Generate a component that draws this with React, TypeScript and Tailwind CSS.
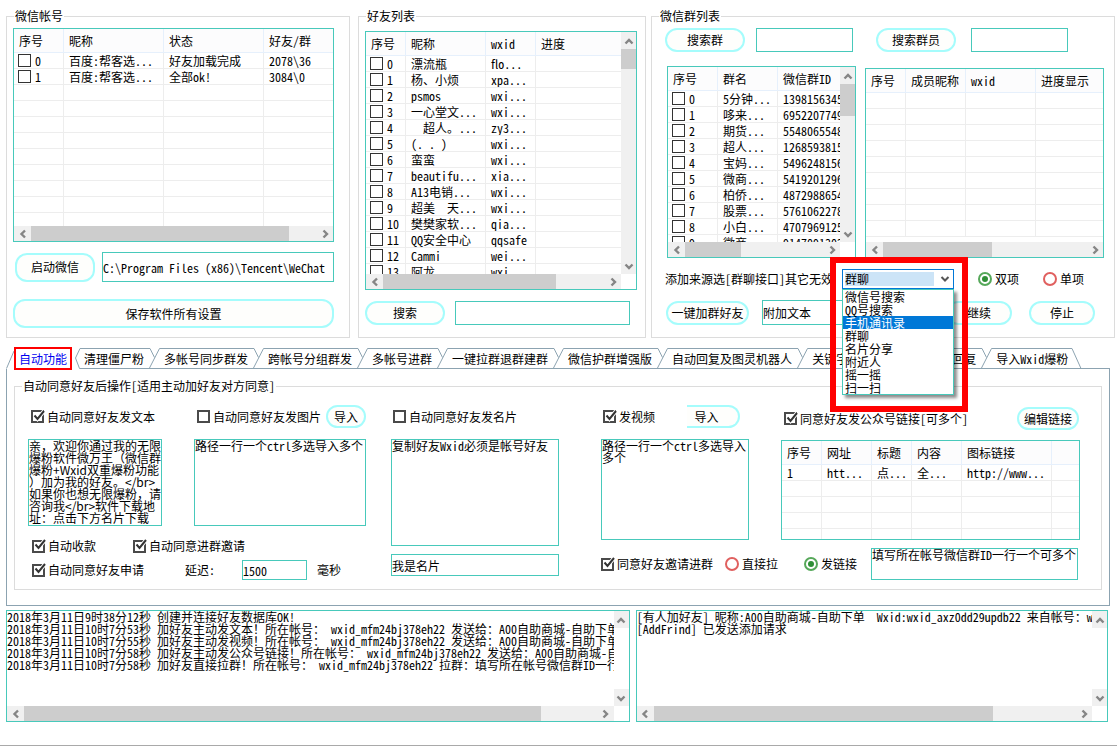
import type { ReactNode } from 'react';
import clsx from 'clsx';

type Column = { label: string; width?: string };

const accountColumns: Column[] = [
  { label: '序号', width: 'w-[50px]' },
  { label: '昵称', width: 'w-[100px]' },
  { label: '状态', width: 'w-[100px]' },
  { label: '好友/群' }
];

const accounts = [
  ['0', '百度:帮客选...', '好友加载完成', '2078\\36'],
  ['1', '百度:帮客选...', '全部ok!', '3084\\0']
];

const friendColumns: Column[] = [
  { label: '序号', width: 'w-[40px]' },
  { label: '昵称', width: 'w-[80px]' },
  { label: 'wxid', width: 'w-[50px]' },
  { label: '进度' }
];

const friends = [
  ['0', '漂流瓶', 'flo...', ''],
  ['1', '杨、小烦', 'xpa...', ''],
  ['2', 'psmos', 'wxi...', ''],
  ['3', '一心堂文...', 'wxi...', ''],
  ['4', '  超人。...', 'zy3...', ''],
  ['5', '(. . )', 'wxi...', ''],
  ['6', '蛮蛮', 'wxi...', ''],
  ['7', 'beautifu...', 'xia...', ''],
  ['8', 'A13电销...', 'wxi...', ''],
  ['9', '超美  天...', 'wxi...', ''],
  ['10', '樊樊家软...', 'qia...', ''],
  ['11', 'QQ安全中心', 'qqsafe', ''],
  ['12', 'Cammi', 'wei...', ''],
  ['13', '阿龙', 'wxi...', '']
];

const groupColumns: Column[] = [
  { label: '序号', width: 'w-[50px]' },
  { label: '群名', width: 'w-[60px]' },
  { label: '微信群ID' }
];

const groups = [
  ['0', '5分钟...', '13981563455'],
  ['1', '哆来...', '69522077492'],
  ['2', '期货...', '55480655480'],
  ['3', '超人...', '12685938152'],
  ['4', '宝妈...', '54962481566'],
  ['5', '微商...', '54192012960'],
  ['6', '柏侨...', '48729886542'],
  ['7', '股票...', '57610622780'],
  ['8', '小白...', '47079691250'],
  ['9', '微商...', '91470913024']
];

const memberColumns: Column[] = [
  { label: '序号', width: 'w-[40px]' },
  { label: '成员昵称', width: 'w-[60px]' },
  { label: 'wxid', width: 'w-[70px]' },
  { label: '进度显示' }
];

const linkColumns: Column[] = [
  { label: '序号', width: 'w-[40px]' },
  { label: '网址', width: 'w-[50px]' },
  { label: '标题', width: 'w-[40px]' },
  { label: '内容', width: 'w-[50px]' },
  { label: '图标链接', width: 'w-[90px]' },
  { label: '' }
];

const links = [['1', 'htt...', '点...', '全...', 'http://www...', '']];

const sources = ['微信号搜索', 'QQ号搜索', '手机通讯录', '群聊', '名片分享', '附近人', '摇一摇', '扫一扫'];

const tabs = [
  '清理僵尸粉',
  '多帐号同步群发',
  '跨帐号分组群发',
  '多帐号进群',
  '一键拉群退群建群',
  '微信护群增强版',
  '自动回复及图灵机器人',
  '关键字回复',
  '多帐号自动回复',
  '导入Wxid爆粉'
];

const welcomeText = `亲，欢迎你通过我的无限
爆粉软件微万王（微信群
爆粉+Wxid双重爆粉功能
）加为我的好友。</br>
如果你也想无限爆粉，请
咨询我</br>软件下载地
址：点击下方名片下载`;

const sendLog = `2018年3月11日9时38分12秒 创建并连接好友数据库OK!
2018年3月11日10时7分53秒 加好友主动发文本！所在帐号： wxid_mfm24bj378eh22 发送给：A00自助商城-自助下单
2018年3月11日10时7分55秒 加好友主动发视频！所在帐号： wxid_mfm24bj378eh22 发送给：A00自助商城-自助下单
2018年3月11日10时7分58秒 加好友主动发公众号链接！所在帐号： wxid_mfm24bj378eh22 发送给：A00自助商城-自助下单
2018年3月11日10时7分58秒 加好友直接拉群！所在帐号： wxid_mfm24bj378eh22 拉群：填写所在帐号微信群ID一行一个可多个`;

const addLog = `[有人加好友] 昵称:A00自助商城-自助下单  Wxid:wxid_axz0dd29updb22 来自帐号：wxid_mfm24bj378eh22
[AddFrind] 已发送添加请求`;

const chevrons = {
  up: 'M1.5 7.5 L5 4 L8.5 7.5',
  down: 'M1.5 3.5 L5 7 L8.5 3.5',
  left: 'M7 1.5 L3.5 5 L7 8.5',
  right: 'M3.5 1.5 L7 5 L3.5 8.5'
};

function Chevron({ dir }: { dir: keyof typeof chevrons }) {
  return (
    <svg width="10" height="10" viewBox="0 0 10 10" fill="none" className="shrink-0">
      <path d={chevrons[dir]} stroke="#858585" strokeWidth="2.4" />
    </svg>
  );
}

function HScroll({ thumb }: { thumb: string }) {
  return (
    <div className="h-[15px] flex min-w-0 flex-1 bg-[#f0f0f0]">
      <div className="w-[17px] shrink-0 flex items-center justify-center"><Chevron dir="left" /></div>
      <div className="flex-1 min-w-0"><div className={clsx('h-full bg-[#cdcdcd]', thumb)} /></div>
      <div className="w-[17px] shrink-0 flex items-center justify-center"><Chevron dir="right" /></div>
    </div>
  );
}

function VScroll({ thumb }: { thumb?: string }) {
  return (
    <div className={clsx('w-[15px] shrink-0 flex flex-col', thumb && 'bg-[#f0f0f0]')}>
      <div className="h-[17px] flex items-center justify-center bg-[#f0f0f0]"><Chevron dir="up" /></div>
      <div className="flex-1"><div className={clsx('bg-[#cdcdcd]', thumb)} /></div>
      <div className="h-[17px] flex items-center justify-center bg-[#f0f0f0]"><Chevron dir="down" /></div>
    </div>
  );
}

// Bordered area with the optional scroll bars round its content
function ScrollBox({ className, hThumb, vBar, vThumb, children }: {
  className: string;
  hThumb?: string;
  vBar?: boolean;
  vThumb?: string;
  children: ReactNode;
}) {
  return (
    <div className={clsx('flex flex-col border border-[#48c9bb] bg-white', className)}>
      <div className="flex flex-1 min-h-0">
        <div className="flex-1 min-w-0 overflow-hidden">{children}</div>
        {vBar && <VScroll thumb={vThumb} />}
      </div>
      {hThumb && (
        <div className="flex">
          <HScroll thumb={hThumb} />
          {vBar && <div className="w-[15px] shrink-0" />}
        </div>
      )}
    </div>
  );
}

function DataTable({ name, columns, rows, total, checkable }: {
  name: string;
  columns: Column[];
  rows: string[][];
  total: number;
  checkable?: boolean;
}) {
  const blank = Array.from({ length: Math.max(0, total - rows.length) });
  return (
    <table aria-label={name} className="w-full table-fixed border-separate border-spacing-0">
      <thead>
        <tr>
          {columns.map((column, index) => (
            <th
              key={index}
              className={clsx(
                'h-6 p-0 pl-[5px] text-left font-normal whitespace-nowrap overflow-hidden bg-[#fcfcfd] border-b border-[#e6f0fc]',
                index < columns.length - 1 && 'border-r',
                column.width
              )}
            >
              {column.label}
            </th>
          ))}
        </tr>
      </thead>
      <tbody>
        {rows.map((row, r) => (
          <tr key={r}>
            {row.map((cell, index) => (
              <td
                key={index}
                className={clsx(
                  'h-4 p-0 leading-[15px] whitespace-pre overflow-hidden border-b border-[#ededed]',
                  index < row.length - 1 && 'border-r',
                  index === 0 && checkable ? 'pl-1' : 'pl-[5px]'
                )}
              >
                {index === 0 && checkable ? (
                  <label className="flex items-center gap-1 h-[15px]">
                    <input type="checkbox" className="appearance-none size-[13px] shrink-0 border border-[#333] bg-white" />
                    {cell}
                  </label>
                ) : cell}
              </td>
            ))}
          </tr>
        ))}
        {blank.map((_, r) => (
          <tr key={r}>
            {columns.map((_, index) => (
              <td key={index} className={clsx('h-4 p-0 border-b border-[#ededed]', index < columns.length - 1 && 'border-r')} />
            ))}
          </tr>
        ))}
      </tbody>
    </table>
  );
}

function Group({ title, children, className }: { title: string; children: ReactNode; className?: string }) {
  return (
    <fieldset className={clsx('min-w-0 border border-[#dcdcdc]', className)}>
      <legend className="ml-[7px] px-px h-4 leading-4">{title}</legend>
      {children}
    </fieldset>
  );
}

function PillButton({ children, className }: { children: ReactNode; className: string }) {
  return (
    <button type="button" className={clsx('shrink-0 border-2 border-[#a5fcfc] bg-[#fefefc] whitespace-nowrap leading-4', className)}>
      {children}
    </button>
  );
}

function TextBox({ name, value, className }: { name: string; value?: string; className: string }) {
  return <input type="text" aria-label={name} defaultValue={value} className={clsx('min-w-0 border border-[#48c9bb] bg-white outline-none', className)} />;
}

function TextArea({ name, value, className }: { name: string; value: string; className: string }) {
  return (
    <textarea
      aria-label={name}
      defaultValue={value}
      className={clsx('block resize-none overflow-hidden border border-[#48c9bb] bg-white leading-3 outline-none', className)}
    />
  );
}

function Check({ label, checked }: { label: string; checked?: boolean }) {
  return (
    <label className="relative flex items-center gap-[3px] h-4 whitespace-nowrap">
      <input type="checkbox" defaultChecked={checked} className="peer appearance-none size-[13px] border-2 border-[#4a4a4a] bg-white" />
      <svg width="15" height="15" viewBox="0 0 15 15" fill="none" className="hidden peer-checked:block absolute left-0 top-0 pointer-events-none">
        <path d="M3.5 6.5 L6.5 10 L13 2" stroke="#fff" strokeWidth="4" />
        <path d="M3.5 6.5 L6.5 10 L13 2" stroke="#333" strokeWidth="2" />
      </svg>
      {label}
    </label>
  );
}

function Radio({ label, name, checked }: { label: string; name: string; checked?: boolean }) {
  return (
    <label className="flex items-center gap-[3px] h-4 whitespace-nowrap">
      <input
        type="radio"
        name={name}
        defaultChecked={checked}
        className="appearance-none size-[14px] rounded-full border-2 border-[#e0605f] checked:border-[#56a85a] checked:bg-[#2f8f36] checked:bg-clip-content checked:p-0.5"
      />
      {label}
    </label>
  );
}

function SourceSelect() {
  return (
    <div className="relative ml-[9px] w-28 shrink-0">
      <div className="h-5 flex items-center border border-[#0078d7] bg-white pl-0.5 pr-[3px]">
        <select aria-label="添加来源" defaultValue="群聊" className="appearance-none h-[14px] w-[89px] bg-[#cce4f7] leading-[14px] outline-none">
          {sources.map((source) => <option key={source}>{source}</option>)}
        </select>
        <svg width="10" height="10" viewBox="0 0 10 10" fill="none" className="ml-auto">
          <path d="M1.5 3 L5 6.5 L8.5 3" stroke="#555" strokeWidth="2" />
        </svg>
      </div>
      <ul role="listbox" aria-label="来源选项" className="absolute z-10 left-0 top-5 w-28 border border-[#48c9bb] bg-white shadow-[3px_3px_3px_rgba(0,0,0,0.45)]">
        {sources.map((source, index) => (
          <li
            key={source}
            role="option"
            aria-selected={index === 2}
            className={clsx('h-[13px] pl-0.5 leading-[13px]', index === 2 && 'bg-[#0078d7] text-white')}
          >
            {source}
          </li>
        ))}
      </ul>
      <div className="absolute z-20 -left-3 -top-3 w-[138px] h-[155px] border-[6px] border-[#ff0000] pointer-events-none" />
    </div>
  );
}

function TabBar() {
  return (
    <div role="tablist" className="mt-2.5 flex h-[21px]">
      <svg width="8" height="21" viewBox="0 0 8 21" fill="none" className="shrink-0">
        <path d="M0.5 20.5 L8 3" stroke="#8ca3b1" />
      </svg>
      <button type="button" role="tab" aria-selected="true" className="-my-px shrink-0 border-2 border-[#ff0000] px-[3px] leading-4 text-[#0000f0] whitespace-nowrap">
        自动功能
      </button>
      <svg width="12" height="21" viewBox="0 0 12 21" fill="none" className="shrink-0">
        <path d="M12 0.5 H8 L3.5 10 L7.5 20.5 H12" stroke="#8ca3b1" />
      </svg>
      {tabs.map((tab, index) => (
        <div key={tab} className="flex shrink-0">
          <button type="button" role="tab" aria-selected="false" className="border-y border-[#8ca3b1] leading-4 whitespace-nowrap">
            {tab}
          </button>
          <svg width="20" height="21" viewBox="0 0 20 21" fill="none" className="shrink-0">
            {index < tabs.length - 1 ? (
              <path d="M0 0.5 H6 L10.5 9.5 M0 20.5 H20 M5.5 20 L15.5 0.5 H20" stroke="#8ca3b1" />
            ) : (
              <path d="M0 0.5 H4 L13 20.5 M0 20.5 H20" stroke="#8ca3b1" />
            )}
          </svg>
        </div>
      ))}
      <div className="flex-1 border-b border-[#8ca3b1]" />
    </div>
  );
}

function AutoPanel() {
  return (
    <div className="border border-t-0 border-[#8ca3b1] px-[7px] pt-[9px] pb-[15px]">
      <Group title="自动同意好友后操作[适用主动加好友对方同意]">
        <div className="flex pl-[13px] pr-[21px] pt-[11px] pb-[9px]">
          {/* Text and picture replies */}
          <div className="flex-[338_1_0%] min-w-0">
            <div className="flex gap-8">
              <div className="flex-[134_1_0%] min-w-0">
                <div className="h-[23px] flex items-center pl-[3px]"><Check label="自动同意好友发文本" checked /></div>
                <TextArea name="好友文本" value={welcomeText} className="mt-[11px] h-[87px] w-full whitespace-pre [font-feature-settings:normal]" />
              </div>
              <div className="flex-[172_1_0%] min-w-0">
                <div className="h-[23px] flex items-center justify-between pl-[3px]">
                  <Check label="自动同意好友发图片" />
                  <PillButton className="h-[23px] w-10 rounded-full">导入</PillButton>
                </div>
                <TextArea name="图片路径" value="路径一行一个ctrl多选导入多个" className="mt-[11px] h-[87px] w-full break-all" />
              </div>
            </div>
            <div className="mt-3 pl-1 flex gap-[37px]">
              <Check label="自动收款" checked />
              <Check label="自动同意进群邀请" checked />
            </div>
            <div className="mt-1.5 pl-1 flex items-center h-5">
              <Check label="自动同意好友申请" checked />
              <label htmlFor="delay" className="ml-[41px] w-[57px]">延迟:</label>
              <input id="delay" type="text" defaultValue="1500" className="w-[65px] h-5 border border-[#48c9bb] outline-none" />
              <span className="ml-2.5">毫秒</span>
            </div>
          </div>

          {/* Business card */}
          <div className="flex-[168_1_0%] min-w-0 ml-[25px]">
            <div className="h-[23px] flex items-center pl-0.5"><Check label="自动同意好友发名片" /></div>
            <TextArea name="名片好友" value="复制好友Wxid必须是帐号好友" className="mt-[11px] h-[107px] w-full break-all" />
            <TextBox name="名片" value="我是名片" className="mt-2 h-[22px] w-full block" />
          </div>

          {/* Video and link replies */}
          <div className="flex-[479_1_0%] min-w-0 ml-[42px]">
            <div className="flex gap-8">
              <div className="flex-[148_1_0%] min-w-0">
                <div className="h-[23px] flex items-center justify-between pl-0.5 pr-[9px]">
                  <Check label="发视频" checked />
                  <PillButton className="h-[23px] w-[53px] rounded-r-full border-l-0 pr-3">导入</PillButton>
                </div>
                <TextArea name="视频路径" value="路径一行一个ctrl多选导入多个" className="mt-[11px] h-[101px] w-full break-all" />
              </div>
              <div className="flex-[299_1_0%] min-w-0">
                <div className="mt-0.5 h-[23px] flex items-center justify-between pl-[3px] pr-px">
                  <Check label="同意好友发公众号链接[可多个]" checked />
                  <PillButton className="h-[23px] w-[62px] rounded-full">编辑链接</PillButton>
                </div>
                <ScrollBox className="mt-2.5 h-[100px]">
                  <DataTable name="链接" columns={linkColumns} rows={links} total={5} />
                </ScrollBox>
              </div>
            </div>
            <div className="mt-2 flex items-center pr-0.5">
              <Check label="同意好友邀请进群" checked />
              <div className="ml-3"><Radio name="invite" label="直接拉" /></div>
              <div className="ml-[26px]"><Radio name="invite" label="发链接" checked /></div>
              <TextArea name="拉群编号" value="填写所在帐号微信群ID一行一个可多个" className="ml-3.5 h-8 flex-1 min-w-0 break-all" />
            </div>
          </div>
        </div>
      </Group>
    </div>
  );
}

function Log({ name, value, className, hThumb }: { name: string; value: string; className: string; hThumb: string }) {
  return (
    <ScrollBox className={clsx('h-28 min-w-0', className)} vBar hThumb={hThumb}>
      <textarea
        aria-label={name}
        readOnly
        wrap="off"
        defaultValue={value}
        className="block size-full resize-none overflow-hidden leading-3 outline-none"
      />
    </ScrollBox>
  );
}

export default function App() {
  return (
    <div className="flex min-h-screen flex-col overflow-hidden border-b border-[#a9a9a9] bg-white pt-2 pl-1.5 pr-0.5 text-xs text-black font-['Noto_Sans_CJK_SC',sans-serif] [font-feature-settings:'hwid']">
      <div className="grid grid-cols-[347fr_288fr_464fr] gap-x-[5px]">
        {/* Accounts */}
        <Group title="微信帐号" className="mr-[3px]">
          <div className="pl-1.5 pr-[15px] pt-1 pb-[9px]">
            <ScrollBox className="h-[214px]" hThumb="w-[258px]">
              <DataTable name="微信帐号" columns={accountColumns} rows={accounts} total={12} checkable />
            </ScrollBox>
            <div className="mt-2.5 flex items-center gap-[7px] pl-0.5">
              <PillButton className="h-[29px] w-20 rounded-xl">启动微信</PillButton>
              <TextBox name="微信路径" value="C:\Program Files (x86)\Tencent\WeChat" className="h-[30px] flex-1" />
            </div>
            <PillButton className="mt-[17px] h-[29px] w-full rounded-xl block">保存软件所有设置</PillButton>
          </div>
        </Group>

        {/* Friends */}
        <Group title="好友列表">
          <div className="pl-1.5 pr-2 pt-[7px]">
            <ScrollBox className="h-[259px]" hThumb="w-[173px]" vBar vThumb="h-5">
              <DataTable name="好友列表" columns={friendColumns} rows={friends} total={14} checkable />
            </ScrollBox>
            <div className="mt-[11px] flex items-center gap-2.5 pr-[7px]">
              <PillButton className="h-6 w-20 rounded-full">搜索</PillButton>
              <TextBox name="搜索好友" className="h-6 flex-1" />
            </div>
          </div>
        </Group>

        {/* Chat groups and their members */}
        <Group title="微信群列表">
          <div className="pl-[13px] pr-2.5 pt-1">
            <div className="grid grid-cols-[191fr_239fr] gap-x-[9px]">
              <div className="min-w-0">
                <div className="flex items-center gap-[11px]">
                  <PillButton className="h-6 w-20 rounded-full">搜索群</PillButton>
                  <TextBox name="搜索群" className="h-6 w-[97px]" />
                </div>
                <ScrollBox className="mt-3.5 ml-0.5 h-48" hThumb="w-14" vBar vThumb="h-8">
                  <DataTable name="微信群列表" columns={groupColumns} rows={groups} total={10} checkable />
                </ScrollBox>
              </div>
              <div className="min-w-0">
                <div className="flex items-center gap-[15px] pl-[11px]">
                  <PillButton className="h-6 w-20 rounded-full">搜索群员</PillButton>
                  <TextBox name="搜索群员" className="h-6 w-[97px]" />
                </div>
                <ScrollBox className="mt-4 h-[190px]" hThumb="w-[109px]">
                  <DataTable name="群成员" columns={memberColumns} rows={[]} total={9} />
                </ScrollBox>
              </div>
            </div>
            <div className="mt-[11px] flex items-center">
              <span className="whitespace-nowrap">添加来源选[群聊接口]其它无效</span>
              <SourceSelect />
              <div className="ml-6"><Radio name="mode" label="双项" checked /></div>
              <div className="ml-6"><Radio name="mode" label="单项" /></div>
            </div>
            <div className="mt-[11px] flex items-center pl-px pr-[9px]">
              <PillButton className="h-6 w-[83px] rounded-full">一键加群好友</PillButton>
              <TextBox name="附加文本" value="附加文本" className="ml-[13px] h-[25px] flex-1" />
              <PillButton className="ml-3.5 h-6 w-[66px] rounded-full">继续</PillButton>
              <PillButton className="ml-[17px] h-6 w-[66px] rounded-full">停止</PillButton>
            </div>
          </div>
        </Group>
      </div>

      <div className="pr-[5px]">
        <TabBar />
        <AutoPanel />
      </div>

      {/* Logs */}
      <div className="mt-1 flex gap-1.5 pr-[7px]">
        <Log name="发送日志" value={sendLog} className="flex-[624_1_0%]" hThumb="w-[517px]" />
        <Log name="添加日志" value={addLog} className="flex-[472_1_0%]" hThumb="w-[339px]" />
      </div>
    </div>
  );
}
